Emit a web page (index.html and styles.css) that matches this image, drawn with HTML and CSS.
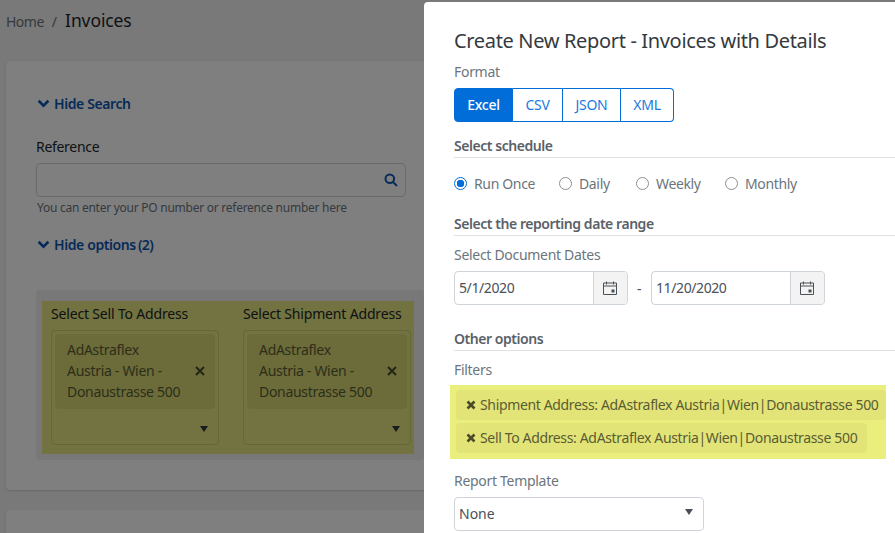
FILE: index.html
```html
<!DOCTYPE html>
<html lang="en">
<head>
<meta charset="utf-8">
<title>Invoices</title>
<link rel="stylesheet" href="styles.css">
</head>
<body>
<main class="page">
  <nav class="crumbs"><span class="crumb-home">Home</span><span class="crumb-sep">/</span><span class="crumb-current">Invoices</span></nav>
  <section class="card">
    <a class="toggle"><svg class="chev" viewBox="0 0 12 8"><path d="M1.5 1.5 6 6l4.500-4.500" /></svg>Hide Search</a>
    <label class="ref-label">Reference</label>
    <div class="ref-input">
      <svg class="search" viewBox="0 0 14 14"><circle cx="5.800" cy="5.800" r="4.300"/><path d="m9 9 4 4"/></svg>
    </div>
    <p class="help">You can enter your PO number or reference number here</p>
    <a class="toggle toggle-options"><svg class="chev" viewBox="0 0 12 8"><path d="M1.5 1.5 6 6l4.500-4.500" /></svg>Hide options<span class="count">(2)</span></a>
    <div class="options">
      <div class="marked">
        <div class="field">
          <div class="field-label">Select Sell To Address</div>
          <div class="picker">
            <div class="picked"><span>AdAstraflex<br>Austria - Wien -<br>Donaustrasse 500</span><svg class="x" viewBox="0 0 10 10"><path d="m1 1 8 8M9 1l-8 8"/></svg></div>
            <div class="picker-foot"><i class="caret"></i></div>
          </div>
        </div>
        <div class="field">
          <div class="field-label">Select Shipment Address</div>
          <div class="picker">
            <div class="picked"><span>AdAstraflex<br>Austria - Wien -<br>Donaustrasse 500</span><svg class="x" viewBox="0 0 10 10"><path d="m1 1 8 8M9 1l-8 8"/></svg></div>
            <div class="picker-foot"><i class="caret"></i></div>
          </div>
        </div>
      </div>
    </div>
  </section>
  <section class="card card-next"></section>
</main>
<div class="backdrop"></div>
<aside class="modal">
  <h1 class="modal-title">Create New Report - Invoices with Details</h1>
  <div class="m-label format-label">Format</div>
  <div class="btn-group">
    <span class="fmt fmt-excel active">Excel</span><span class="fmt fmt-csv">CSV</span><span class="fmt fmt-json">JSON</span><span class="fmt fmt-xml">XML</span>
  </div>
  <h2 class="section-head sh-schedule">Select schedule</h2>
  <div class="radios">
    <span class="radio on r-once"><i></i>Run Once</span>
    <span class="radio r-daily"><i></i>Daily</span>
    <span class="radio r-weekly"><i></i>Weekly</span>
    <span class="radio r-monthly"><i></i>Monthly</span>
  </div>
  <h2 class="section-head sh-range">Select the reporting date range</h2>
  <div class="m-label dates-label">Select Document Dates</div>
  <div class="dates">
    <div class="date"><span class="date-val">5/1/2020</span><span class="addon"><svg viewBox="0 0 14 14"><path class="cal" d="M.5 2h13v11.500H.5zM.5 5h13M3.500.5v3M10.500.5v3"/><rect class="cal-fill" x="8.500" y="8.500" width="3" height="3"/></svg></span></div>
    <span class="dash">-</span>
    <div class="date"><span class="date-val">11/20/2020</span><span class="addon"><svg viewBox="0 0 14 14"><path class="cal" d="M.5 2h13v11.500H.5zM.5 5h13M3.500.5v3M10.500.5v3"/><rect class="cal-fill" x="8.500" y="8.500" width="3" height="3"/></svg></span></div>
  </div>
  <h2 class="section-head sh-other">Other options</h2>
  <div class="m-label filters-label">Filters</div>
  <div class="filters">
    <div class="tag tag-a"><svg class="tag-x" viewBox="0 0 10 10"><path d="m1.500 1.500 7 7M8.500 1.500l-7 7"/></svg>Shipment Address: AdAstraflex Austria|Wien|Donaustrasse 500</div>
    <div class="tag"><svg class="tag-x" viewBox="0 0 10 10"><path d="m1.500 1.500 7 7M8.500 1.500l-7 7"/></svg>Sell To Address: AdAstraflex Austria|Wien|Donaustrasse 500</div>
  </div>
  <div class="m-label template-label">Report Template</div>
  <div class="template-select"><span>None</span><i class="caret caret-m"></i></div>
</aside>
</body>
</html>
```
FILE: styles.css
```css
* { box-sizing: border-box; }
html, body { margin: 0; height: 100%; }
body {
  width: 895px; height: 533px; overflow: hidden; position: relative;
  background: #f2f2f2; color: #212529;
  font-family: "Noto Sans", "Open Sans", sans-serif; font-size: 14px;
}
.page { padding: 0 0 0 6px; height: 533px; overflow: hidden; }
.crumbs { height: 61px; display: flex; align-items: baseline; padding-top: 8px; line-height: 24px; }
.crumb-home { font-size: 14px; color: #6c757d; letter-spacing: -.5px; }
.crumb-sep { font-size: 14px; color: #6c757d; margin: 0 8px 0 8px; }
.crumb-current { font-size: 17.500px; color: #212529; letter-spacing: -.1px; }
.card {
  width: 1000px; height: 429px; background: #fff; border-radius: 4px;
  padding: 31px 0 0 31px; box-shadow: 0 1px 2px rgba(0,0,0,.15);
}
.card-next { margin-top: 20px; height: 200px; }
.toggle { display: flex; align-items: center; height: 22px; color: #0e56b0; font-size: 14px; font-weight: 600; letter-spacing: -.4px; }
.chev { width: 13px; height: 9px; margin: 1px 4px 0 0; fill: none; stroke: #0e56b0; stroke-width: 2.400; }
.count { margin-left: 2px; letter-spacing: -.6px; }
.ref-label { display: block; margin: 23px 0 0 -1px; line-height: 20px; font-size: 14px; letter-spacing: -.3px; }
.ref-input {
  width: 370px; height: 34px; margin: 6px 0 0 -1px; border: 1px solid #ced4da; border-radius: 4px;
  display: flex; align-items: center; justify-content: flex-end; padding-right: 7px;
}
.search { width: 14px; height: 14px; fill: none; stroke: #0e56b0; stroke-width: 2; }
.help { margin: 3px 0 0; font-size: 12px; line-height: 16px; color: #6c757d; letter-spacing: -.26px; }
.toggle-options { margin-top: 17px; }
.options { width: 388px; height: 170px; margin: 35px 0 0 -1px; background: #f0f1f3; border-radius: 4px; padding: 11px 0 0 6px; overflow: hidden; }
.marked { width: 372px; height: 153px; background: #e4e680; display: flex; gap: 24px; padding: 3px 0 0 9px; }
.field { width: 168px; flex: none; }
.field-label { font-size: 14px; line-height: 20px; letter-spacing: -.17px; white-space: nowrap; }
.picker { height: 115px; margin-top: 6px; border: 1px solid #cacc74; border-radius: 4px; padding: 3px; }
.picked {
  height: 75px; background: #d7d974; border-radius: 4px; padding: 5px 10px 0 12px;
  display: flex; align-items: flex-start; font-size: 14px; line-height: 21px; color: #5b5c33; letter-spacing: -.3px;
}
.picked span { flex: 1; }
.x { width: 10px; height: 10px; margin-top: 27px; fill: none; stroke: #4b4b2a; stroke-width: 2; flex: none; }
.picker-foot { display: flex; justify-content: flex-end; padding: 17px 7px 0 0; }
.caret { display: block; width: 0; height: 0; border-left: 4px solid transparent; border-right: 4px solid transparent; border-top: 6px solid #343a40; }
.backdrop { position: absolute; inset: 0; background: rgba(0,0,0,.5); }
.modal {
  position: absolute; left: 424px; top: 2px; width: 471px; height: 531px; overflow: hidden; background: #fff;
  border-radius: 4px 0 0 0; padding: 0 0 0 30px; color: #495057;
}
.modal-title { margin: 24px 0 0; font-size: 20px; font-weight: 400; line-height: 30px; color: #343a40; letter-spacing: -.34px; white-space: nowrap; }
.m-label { font-size: 14px; line-height: 20px; color: #6c757d; letter-spacing: -.3px; }
.format-label { margin-top: 6px; }
.btn-group { display: flex; width: 220px; height: 34px; margin-top: 6px; }
.fmt {
  display: flex; align-items: center; justify-content: center; height: 34px; padding-bottom: 2px; font-size: 14px;
  color: #1a7ae0; border: 1px solid #006dd9; border-left-width: 0; background: #fff; letter-spacing: -.3px;
}
.fmt-excel { width: 59px; border-left-width: 1px; border-radius: 4px 0 0 4px; background: #006dd9; color: #fff; font-weight: 500; }
.fmt-csv { width: 50px; }
.fmt-json { width: 58px; }
.fmt-xml { width: 53px; border-radius: 0 4px 4px 0; }
.section-head {
  margin: 0; width: 470px; font-size: 14px; font-weight: 600; line-height: 20px; padding-bottom: 1px;
  color: #5a6169; border-bottom: 1px solid #dee2e6; letter-spacing: -.45px;
}
.sh-schedule { margin-top: 14px; }
.radios { display: flex; height: 20px; margin-top: 15px; align-items: center; font-size: 14px; color: #6c757d; letter-spacing: -.35px; }
.radio { display: flex; align-items: center; }
.radio i { width: 13px; height: 13px; border: 1px solid #8a8f94; border-radius: 50%; margin-right: 7px; display: block; flex: none; }
.radio.on i { border-color: #006dd9; background: radial-gradient(circle, #006dd9 0 3.500px, #fff 4px); }
.r-once { width: 105px; }
.r-daily { width: 77px; }
.r-weekly { width: 89px; }
.sh-range { margin-top: 21px; }
.dates-label { margin-top: 9px; }
.dates { display: flex; align-items: center; margin-top: 6px; }
.date { width: 173.500px; height: 34px; border: 1px solid #ced4da; border-radius: 4px; display: flex; overflow: hidden; }
.date-val { flex: 1; padding-left: 4px; line-height: 32px; font-size: 14px; letter-spacing: -.4px; }
.addon { width: 34px; background: #f3f3f3; border-left: 1px solid #ced4da; display: flex; align-items: center; justify-content: center; }
.addon svg { width: 14px; height: 14px; }
.cal { fill: none; stroke: #495057; stroke-width: 1; }
.cal-fill { fill: #495057; }
.dash { width: 23.500px; text-align: center; font-size: 14px; }
.sh-other { margin-top: 24px; }
.filters-label { margin-top: 9px; }
.filters {
  width: 436px; height: 74px; margin: 5px 0 0 -4px; background: #eaee7d; padding: 5px 0 0 6px;
  display: flex; flex-direction: column; gap: 3px; align-items: flex-start;
}
.tag {
  display: flex; align-items: center; height: 30px; padding: 0 10px 2px 10px; background: #e2e478; border-radius: 4px;
  font-size: 14px; color: #5b5c33; letter-spacing: -.35px; white-space: nowrap;
}
.tag-a { width: 430px; padding-right: 0; }
.tag-x { width: 10px; height: 10px; flex: none; margin: 2px 4px 0 0; fill: none; stroke: #4b4b2a; stroke-width: 2.600; }
.template-label { margin-top: 12px; }
.template-select {
  width: 250px; height: 34px; margin-top: 6px; border: 1px solid #ced4da; border-radius: 4px;
  display: flex; align-items: center; justify-content: space-between; padding: 0 10px 2px 4px; font-size: 14px;
}
.caret-m { margin-bottom: 2px; border-top-color: #495057; }
```
